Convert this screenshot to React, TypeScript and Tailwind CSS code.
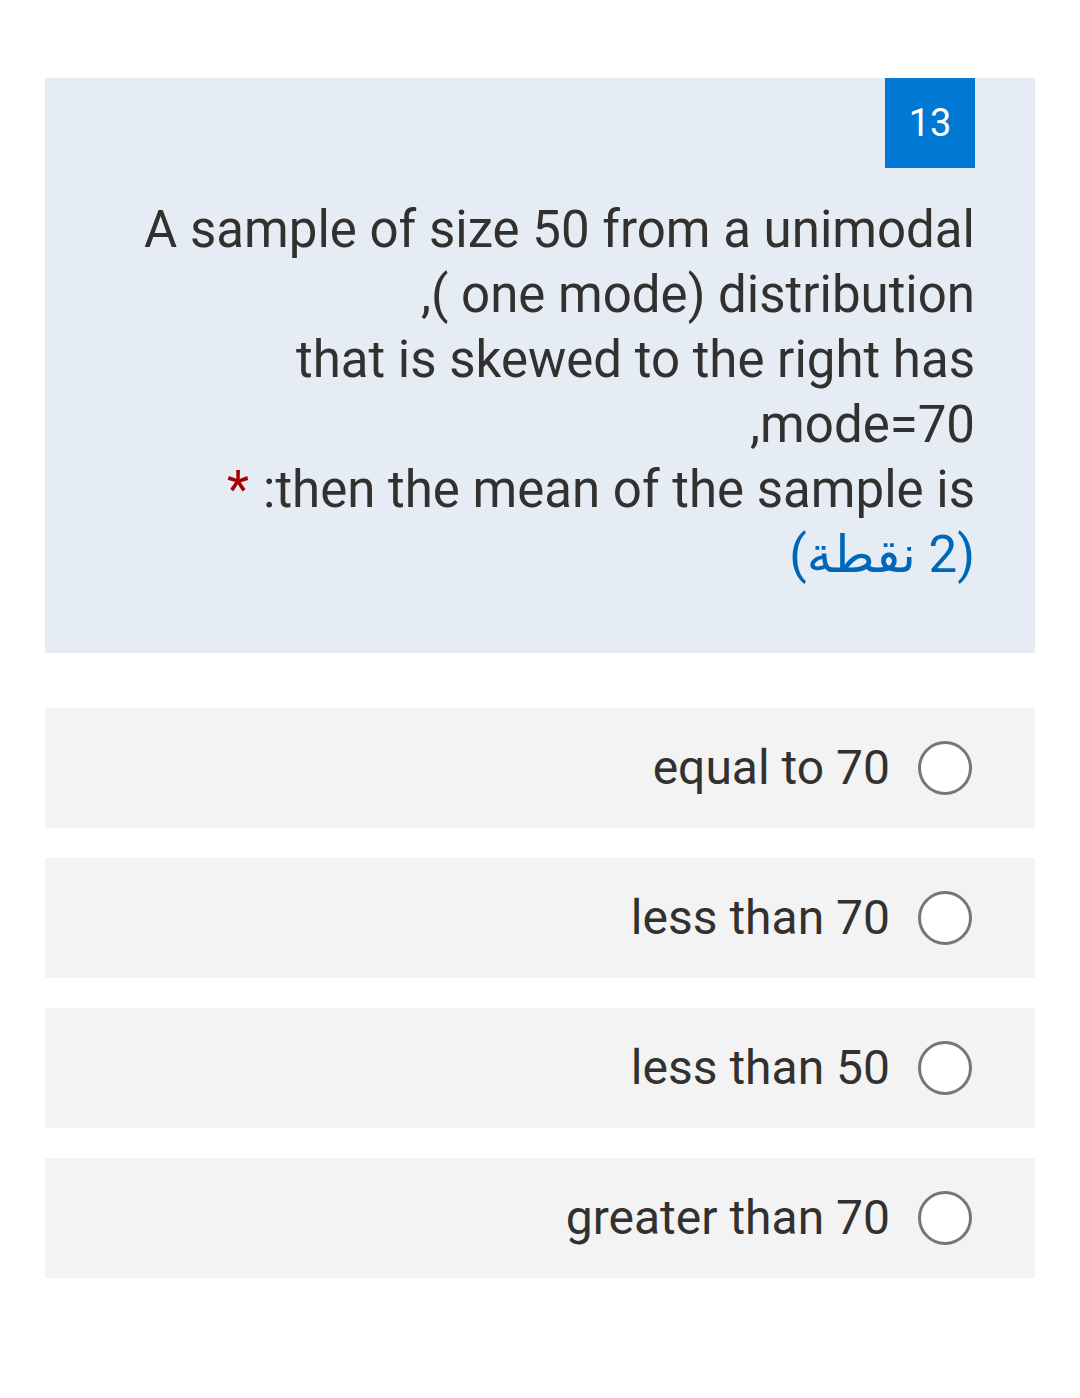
import React from 'react';

const options = ['equal to 70', 'less than 70', 'less than 50', 'greater than 70'];

const font = { fontFamily: 'Roboto, "Noto Sans", "DejaVu Sans", sans-serif' };

export default function App() {
  return (
    <div className="min-h-[1398px] bg-white pt-[78px] px-[45px]" style={font}>
      {/* Question card */}
      <div className="bg-[#e5ecf3] pr-[60px] pb-[66px]">
        <div className="flex justify-end">
          <div className="w-[90px] h-[90px] bg-[#0078d4] text-white text-[38px] flex items-center justify-center">
            13
          </div>
        </div>
        <div className="mt-[29px] text-right text-[51px] leading-[65px] text-[#323130]">
          <div>A sample of size 50 from a unimodal</div>
          <div>,( one mode) distribution</div>
          <div>that is skewed to the right has</div>
          <div>,mode=70</div>
          <div>
            <span className="text-[#a80000] mr-[14px]">*</span>
            :then the mean of the sample is
          </div>
          <div className="text-[#0067b8]">
            <span dir="rtl">(2 نقطة)</span>
          </div>
        </div>
      </div>

      {/* Options */}
      <div className="mt-[55px] flex flex-col gap-[30px]">
        {options.map((opt) => (
          <div key={opt} className="h-[120px] bg-[#f3f3f3] flex items-center justify-end pr-[63px]">
            <span className="text-[48px] text-[#323130] leading-none">{opt}</span>
            <span className="ml-[28px] w-[54px] h-[54px] rounded-full border-[3px] border-[#767676] bg-white" />
          </div>
        ))}
      </div>
    </div>
  );
}
